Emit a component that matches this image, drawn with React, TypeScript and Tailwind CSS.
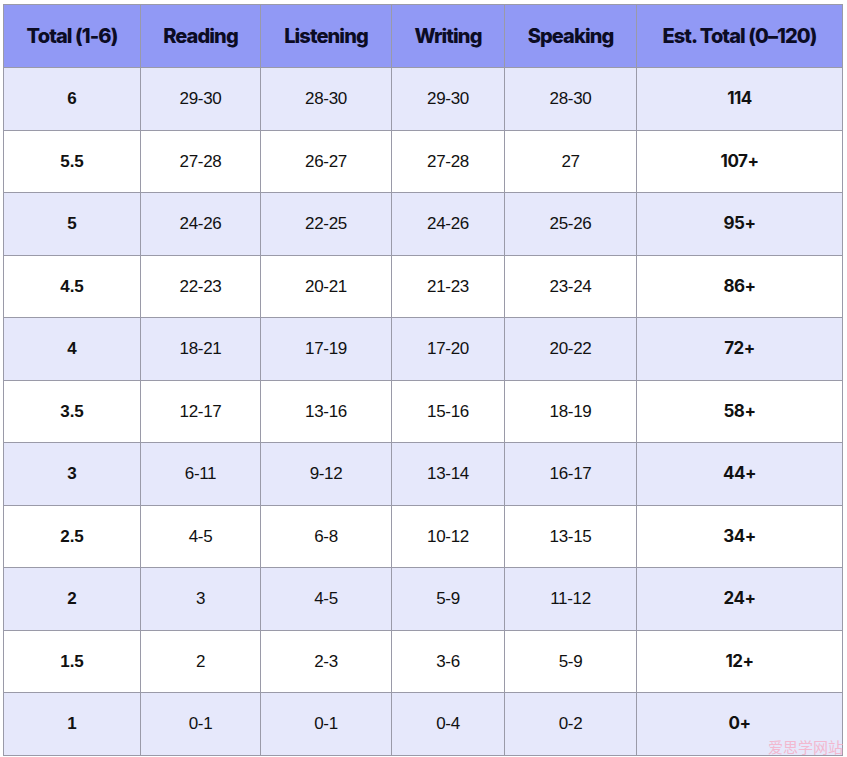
const rows: [string, string, string, string, string, string][] = [
  ['6', '29-30', '28-30', '29-30', '28-30', '114'],
  ['5.5', '27-28', '26-27', '27-28', '27', '107+'],
  ['5', '24-26', '22-25', '24-26', '25-26', '95+'],
  ['4.5', '22-23', '20-21', '21-23', '23-24', '86+'],
  ['4', '18-21', '17-19', '17-20', '20-22', '72+'],
  ['3.5', '12-17', '13-16', '15-16', '18-19', '58+'],
  ['3', '6-11', '9-12', '13-14', '16-17', '44+'],
  ['2.5', '4-5', '6-8', '10-12', '13-15', '34+'],
  ['2', '3', '4-5', '5-9', '11-12', '24+'],
  ['1.5', '2', '2-3', '3-6', '5-9', '12+'],
  ['1', '0-1', '0-1', '0-4', '0-2', '0+'],
];

const headers = ['Total (1-6)', 'Reading', 'Listening', 'Writing', 'Speaking', 'Est. Total (0–120)'];
const widths = ['w-[137px]', 'w-[120px]', 'w-[131px]', 'w-[113px]', 'w-[132px]', 'w-[206px]'];

export default function App() {
  return (
    <div className="relative w-[847px] h-[757px] bg-white pt-[4px] pl-[3px]">
      <table className="border-collapse table-fixed w-[839px] text-[#111]">
        <thead>
          <tr className="h-[63px] bg-[#9199f5]">
            {headers.map((h, i) => (
              <th
                key={h}
                className={`${widths[i]} border border-[#9a9aa8] text-center font-['Inter',sans-serif] font-extrabold text-[20px] tracking-[-0.045em] text-[#0c0c24]`}
              >
                {h}
              </th>
            ))}
          </tr>
        </thead>
        <tbody>
          {rows.map((r, ri) => (
            <tr key={ri} className={`h-[62.5px] ${ri % 2 === 0 ? 'bg-[#e6e8fb]' : 'bg-white'}`}>
              {r.map((c, ci) => (
                <td
                  key={ci}
                  className={`border border-[#9a9aa8] text-center text-[17px] ${
                    ci === 0
                      ? "font-['Liberation_Sans',sans-serif] font-bold"
                      : ci === 5
                      ? "font-['Inter',sans-serif] font-bold tracking-[-0.03em]"
                      : "font-['Liberation_Sans',sans-serif] tracking-[-0.02em]"
                  }`}
                >
                  {c}
                </td>
              ))}
            </tr>
          ))}
        </tbody>
      </table>
      <div className="absolute right-[4px] bottom-[3px] text-[15px] leading-none text-[#f2b8cf] font-['Noto_Sans_CJK_SC',sans-serif]">
        爱思学网站
      </div>
    </div>
  );
}
